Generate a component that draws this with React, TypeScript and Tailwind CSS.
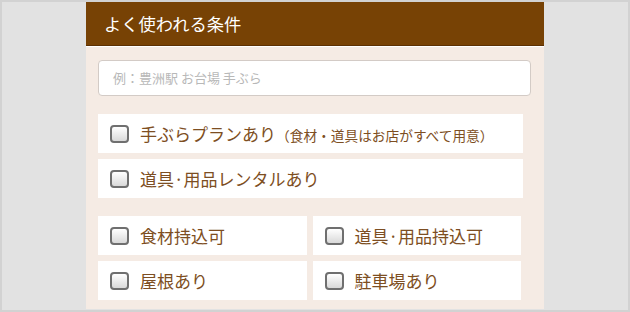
const font = { fontFamily: '"Noto Sans CJK JP", "Noto Sans", sans-serif' };

const Check = () => (
  <span className="block h-[18px] w-[19px] shrink-0 rounded-[4px] border-2 border-[#6f6f6f] bg-gradient-to-b from-white to-[#d9d9d9]" />
);

const Option = ({ label, note, className = "" }: { label: string; note?: string; className?: string }) => (
  <label className={`flex h-[39px] items-center gap-[11px] bg-white pl-[12px] ${className}`}>
    <Check />
    <span className="text-[17px] leading-none text-[#7d4e22]">
      {label}
      {note && <span className="text-[13.7px]">{note}</span>}
    </span>
  </label>
);

export default function App() {
  return (
    <div className="flex h-[312px] w-[630px] justify-center border-2 border-[#d2d2d2] bg-[#e2e2e2]" style={font}>
      <div className="flex h-[307px] w-[458px] flex-col bg-[#f5ebe4]">
        <div className="flex h-[44px] shrink-0 items-center border-b border-[#5c3003] bg-[#774205] pl-[18px] text-[17.3px] text-white shadow-[0_1px_0_#fff]">
          よく使われる条件
        </div>
        <div className="flex flex-col pl-[12px] pr-[13px] pt-[14px]">
          <div className="flex h-[36px] items-center rounded-[4px] border border-[#d3cbc6] bg-white pl-[14px] text-[13px] text-[#b8b8b8]">
            例：豊洲駅 お台場 手ぶら
          </div>
          <div className="mt-[18px] flex w-[425px] flex-col gap-[6px]">
            <Option label="手ぶらプランあり" note="（食材・道具はお店がすべて用意）" />
            <Option label="道具·用品レンタルあり" />
          </div>
          <div className="mt-[18px] grid w-[423px] grid-cols-2 gap-[6px]">
            <Option label="食材持込可" />
            <Option label="道具·用品持込可" />
            <Option label="屋根あり" />
            <Option label="駐車場あり" />
          </div>
        </div>
      </div>
    </div>
  );
}
